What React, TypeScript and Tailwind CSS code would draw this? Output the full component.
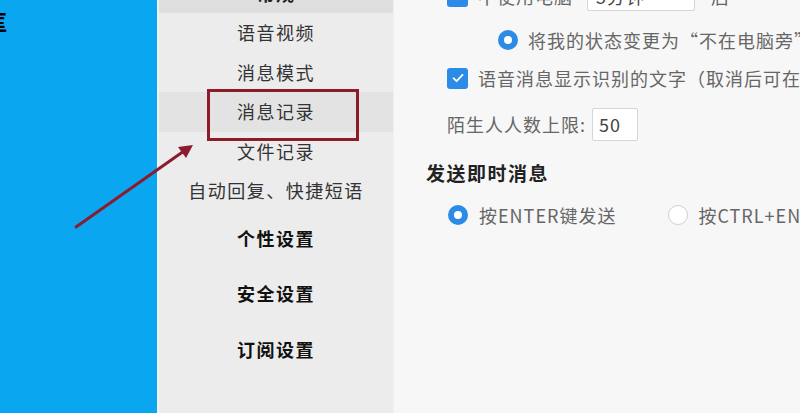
const font = { fontFamily: '"Noto Sans CJK SC", "Noto Sans", sans-serif' };

function Checkbox() {
  return (
    <span className="flex h-[21px] w-[21px] shrink-0 items-center justify-center rounded-[3px] bg-[#2b8be6]">
      <svg width="14" height="14" viewBox="0 0 14 14" fill="none">
        <path d="M2.5 7.2 5.6 10.2 11.5 3.8" stroke="white" strokeWidth="1.8" strokeLinecap="round" strokeLinejoin="round" />
      </svg>
    </span>
  );
}

function Radio({ checked }: { checked: boolean }) {
  return checked ? (
    <span className="flex h-[20px] w-[20px] shrink-0 items-center justify-center rounded-full bg-[#2b8be6]">
      <span className="h-[8px] w-[8px] rounded-full bg-white" />
    </span>
  ) : (
    <span className="block h-[20px] w-[20px] shrink-0 rounded-full border border-[#cfcfcf] bg-white" />
  );
}

const navItems = ["语音视频", "消息模式", "消息记录", "文件记录", "自动回复、快捷短语"];
const boldItems = ["个性设置", "安全设置", "订阅设置"];

export default function App() {
  return (
    <div className="relative flex h-[413px] w-[800px] overflow-hidden" style={font}>
      {/* desktop */}
      <div className="w-[157px] shrink-0 bg-[#0aa6f0] pt-[10px]">
        <span className="-ml-[14px] block text-[21px] font-bold leading-[22px] text-black">匡</span>
      </div>

      {/* sidebar */}
      <div className="flex w-[236px] shrink-0 flex-col border-l-2 border-[#f2f2f2] bg-[#ececec] text-[18px] tracking-[1.5px]">
        <div className="-mt-[27px] flex h-[40px] items-center justify-center bg-[#dedede] font-bold text-[#222]">常规</div>
        {navItems.map((t) => (
          <div
            key={t}
            className={
              "flex h-[39.5px] items-center justify-center text-[#333] " + (t === "消息记录" ? "bg-[#e3e3e3]" : "")
            }
          >
            {t}
          </div>
        ))}
        {boldItems.map((t) => (
          <div key={t} className="flex h-[55.5px] items-center justify-center font-bold text-[#111]">
            {t}
          </div>
        ))}
      </div>

      {/* settings pane */}
      <div className="flex flex-1 flex-col border-l border-[#f0f0f0] bg-[#f7f7f7] pl-[32px] text-[18px] tracking-[1px] text-[#666]">
        <div className="-mt-[26px] flex h-[44px] items-center gap-[10px] pl-[21px]">
          <Checkbox />
          <span>不使用电脑</span>
          <span className="ml-[4px] flex h-[30px] w-[108px] items-center rounded-[2px] border border-[#d6d6d6] bg-white pl-[8px] text-[#444]">
            5分钟
          </span>
          <span className="ml-[6px]">后</span>
        </div>
        <div className="flex h-[44px] items-center gap-[10px] pl-[72px] whitespace-nowrap">
          <Radio checked />
          <span>将我的状态变更为“不在电脑旁”</span>
        </div>
        <div className="flex h-[32px] items-center gap-[10px] pl-[21px] whitespace-nowrap">
          <Checkbox />
          <span>语音消息显示识别的文字（取消后可在语音消息上右键转文字）</span>
        </div>
        <div className="flex h-[60px] items-center pl-[21px] whitespace-nowrap">
          <span>陌生人人数上限:</span>
          <span className="ml-[6px] flex h-[33px] w-[46px] items-center rounded-[2px] border border-[#d6d6d6] bg-white pl-[6px] text-[#444]">
            50
          </span>
        </div>
        <div className="flex h-[38px] items-center text-[19px] font-bold tracking-[1.5px] text-[#222]">发送即时消息</div>
        <div className="flex h-[46px] items-center pl-[22px] whitespace-nowrap">
          <Radio checked />
          <span className="ml-[11px]">按ENTER键发送</span>
          <span className="ml-[52px]">
            <Radio checked={false} />
          </span>
          <span className="ml-[10px]">按CTRL+ENTER键发送</span>
        </div>
      </div>

      {/* annotation: highlight box */}
      <div className="pointer-events-none absolute left-[207px] top-[89px] h-[52px] w-[152px] border-[3px] border-[#8c1d28]" />

      {/* annotation: arrow */}
      <svg className="pointer-events-none absolute left-0 top-0" width="800" height="413">
        <line x1="76" y1="227" x2="184" y2="151" stroke="#8a1c30" strokeWidth="3" strokeLinecap="round" />
        <polygon points="193,145 178,147 186,158" fill="#8a1c30" />
      </svg>
    </div>
  );
}
